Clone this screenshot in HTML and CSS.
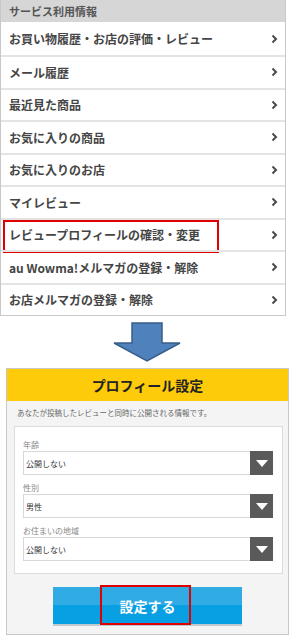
FILE: index.html
```html
<!DOCTYPE html>
<html lang="ja">
<head>
<meta charset="utf-8">
<link rel="stylesheet" href="styles.css">
</head>
<body>
<div class="menu">
  <div class="menu-head">サービス利用情報</div>
  <div class="row"><span>お買い物履歴・お店の評価・レビュー</span><svg class="chev" width="7" height="10" viewBox="0 0 7 10"><polyline points="1.5,1.5 5,5 1.5,8.5"/></svg></div>
  <div class="row"><span>メール履歴</span><svg class="chev" width="7" height="10" viewBox="0 0 7 10"><polyline points="1.5,1.5 5,5 1.5,8.5"/></svg></div>
  <div class="row"><span>最近見た商品</span><svg class="chev" width="7" height="10" viewBox="0 0 7 10"><polyline points="1.5,1.5 5,5 1.5,8.5"/></svg></div>
  <div class="row"><span>お気に入りの商品</span><svg class="chev" width="7" height="10" viewBox="0 0 7 10"><polyline points="1.5,1.5 5,5 1.5,8.5"/></svg></div>
  <div class="row"><span>お気に入りのお店</span><svg class="chev" width="7" height="10" viewBox="0 0 7 10"><polyline points="1.5,1.5 5,5 1.5,8.5"/></svg></div>
  <div class="row"><span>マイレビュー</span><svg class="chev" width="7" height="10" viewBox="0 0 7 10"><polyline points="1.5,1.5 5,5 1.5,8.5"/></svg></div>
  <div class="row highlight"><span>レビュープロフィールの確認・変更</span><svg class="chev" width="7" height="10" viewBox="0 0 7 10"><polyline points="1.5,1.5 5,5 1.5,8.5"/></svg><div class="redbox row-red"></div></div>
  <div class="row"><span>au Wowma!メルマガの登録・解除</span><svg class="chev" width="7" height="10" viewBox="0 0 7 10"><polyline points="1.5,1.5 5,5 1.5,8.5"/></svg></div>
  <div class="row"><span>お店メルマガの登録・解除</span><svg class="chev" width="7" height="10" viewBox="0 0 7 10"><polyline points="1.5,1.5 5,5 1.5,8.5"/></svg></div>
</div>

<div class="arrow-wrap">
  <svg width="70" height="41" viewBox="0 0 70 41">
    <polygon points="20,1 50,1 50,21 68,21 35,39 2,21 20,21" fill="#4f81bd" stroke="#385d8a" stroke-width="1.5" stroke-linejoin="miter"/>
  </svg>
</div>

<div class="panel">
  <div class="panel-head">プロフィール設定</div>
  <div class="panel-body">
    <p class="desc">あなたが投稿したレビューと同時に公開される情報です。</p>
    <div class="form">
      <div class="label first">年齢</div>
      <div class="select"><span>公開しない</span><div class="sel-btn"><svg width="12" height="7" viewBox="0 0 12 7"><polygon points="0,0 12,0 6,7" fill="#fff"/></svg></div></div>
      <div class="label">性別</div>
      <div class="select"><span>男性</span><div class="sel-btn"><svg width="12" height="7" viewBox="0 0 12 7"><polygon points="0,0 12,0 6,7" fill="#fff"/></svg></div></div>
      <div class="label">お住まいの地域</div>
      <div class="select"><span>公開しない</span><div class="sel-btn"><svg width="12" height="7" viewBox="0 0 12 7"><polygon points="0,0 12,0 6,7" fill="#fff"/></svg></div></div>
    </div>
    <div class="btn-row">
      <div class="btn"><span>設定する</span><div class="redbox btn-red"></div></div>
    </div>
  </div>
</div>
</body>
</html>
```

FILE: styles.css
```css
* { box-sizing: border-box; }
body {
  margin: 0;
  background: #fff;
  font-family: "Noto Sans CJK JP", "Noto Sans", sans-serif;
  width: 289px;
}
.menu {
  width: 286px;
  border: 1px solid #c8c8c8;
  border-top: none;
  background: #fff;
}
.menu-head {
  height: 22px;
  background: #d6d6d6;
  color: #555;
  font-size: 11px;
  font-weight: 700;
  line-height: 22px;
  padding-left: 8px;
}
.row {
  position: relative;
  height: 32.5px;
  border-top: 2px solid #e4e4e4;
  display: flex;
  align-items: center;
  justify-content: space-between;
  padding: 0 7px 0 8px;
  color: #454545;
  font-size: 12px;
  font-weight: 700;
}
.menu-head + .row { border-top: none; height: 33px; }
.chev polyline {
  fill: none;
  stroke: #4a4a4a;
  stroke-width: 2;
}
.redbox {
  position: absolute;
  border: 2px solid #e00000;
}
.row-red {
  left: 2px;
  top: 0;
  width: 216px;
  height: 33px;
}
.arrow-wrap {
  display: flex;
  justify-content: center;
  padding: 6px 0 5px;
  width: 294px;
}
.arrow-wrap svg { display: block; }
.panel {
  margin-left: 6px;
  width: 283px;
  border: 1px solid #c8c8c8;
  background: #f4f4f4;
}
.panel-head {
  height: 32px;
  background: #fecb0a;
  color: #222;
  font-size: 14px;
  font-weight: 700;
  text-align: center;
  line-height: 32px;
}
.panel-body {
  padding: 0 5px 10px 7px;
}
.desc {
  margin: 0;
  padding: 5px 0 0 3px;
  height: 25px;
  font-size: 7.5px;
  color: #666;
  line-height: 14px;
}
.form {
  background: #fff;
  border: 1px solid #dcdcdc;
  padding: 0 9px 12px 8px;
}
.label {
  height: 13px;
  margin-top: 6px;
  font-size: 8px;
  line-height: 13px;
  color: #888;
}
.label.first { margin-top: 11px; }
.select {
  height: 24px;
  border: 1px solid #d8d8d8;
  display: flex;
  align-items: center;
  justify-content: space-between;
  background: #fff;
}
.select span {
  font-size: 8px;
  color: #333;
  padding-left: 2px;
}
.sel-btn {
  width: 23px;
  height: 24px;
  margin: -1px -1px -1px 0;
  background: #5a5a5a;
  display: flex;
  align-items: center;
  justify-content: center;
}
.btn-row {
  display: flex;
  justify-content: flex-start;
  padding: 13px 0 0 39px;
}
.btn {
  position: relative;
  width: 189px;
  height: 37px;
  background: linear-gradient(#30abe3 0, #30abe3 48%, #08a0e2 48%, #08a0e2 100%);
  box-shadow: 0 2px 0 #bfc9ce;
  color: #fff;
  font-size: 14px;
  font-weight: 700;
  display: flex;
  align-items: center;
  justify-content: center;
}
.btn-red {
  left: 47px;
  top: -2px;
  width: 91px;
  height: 40px;
}
```
